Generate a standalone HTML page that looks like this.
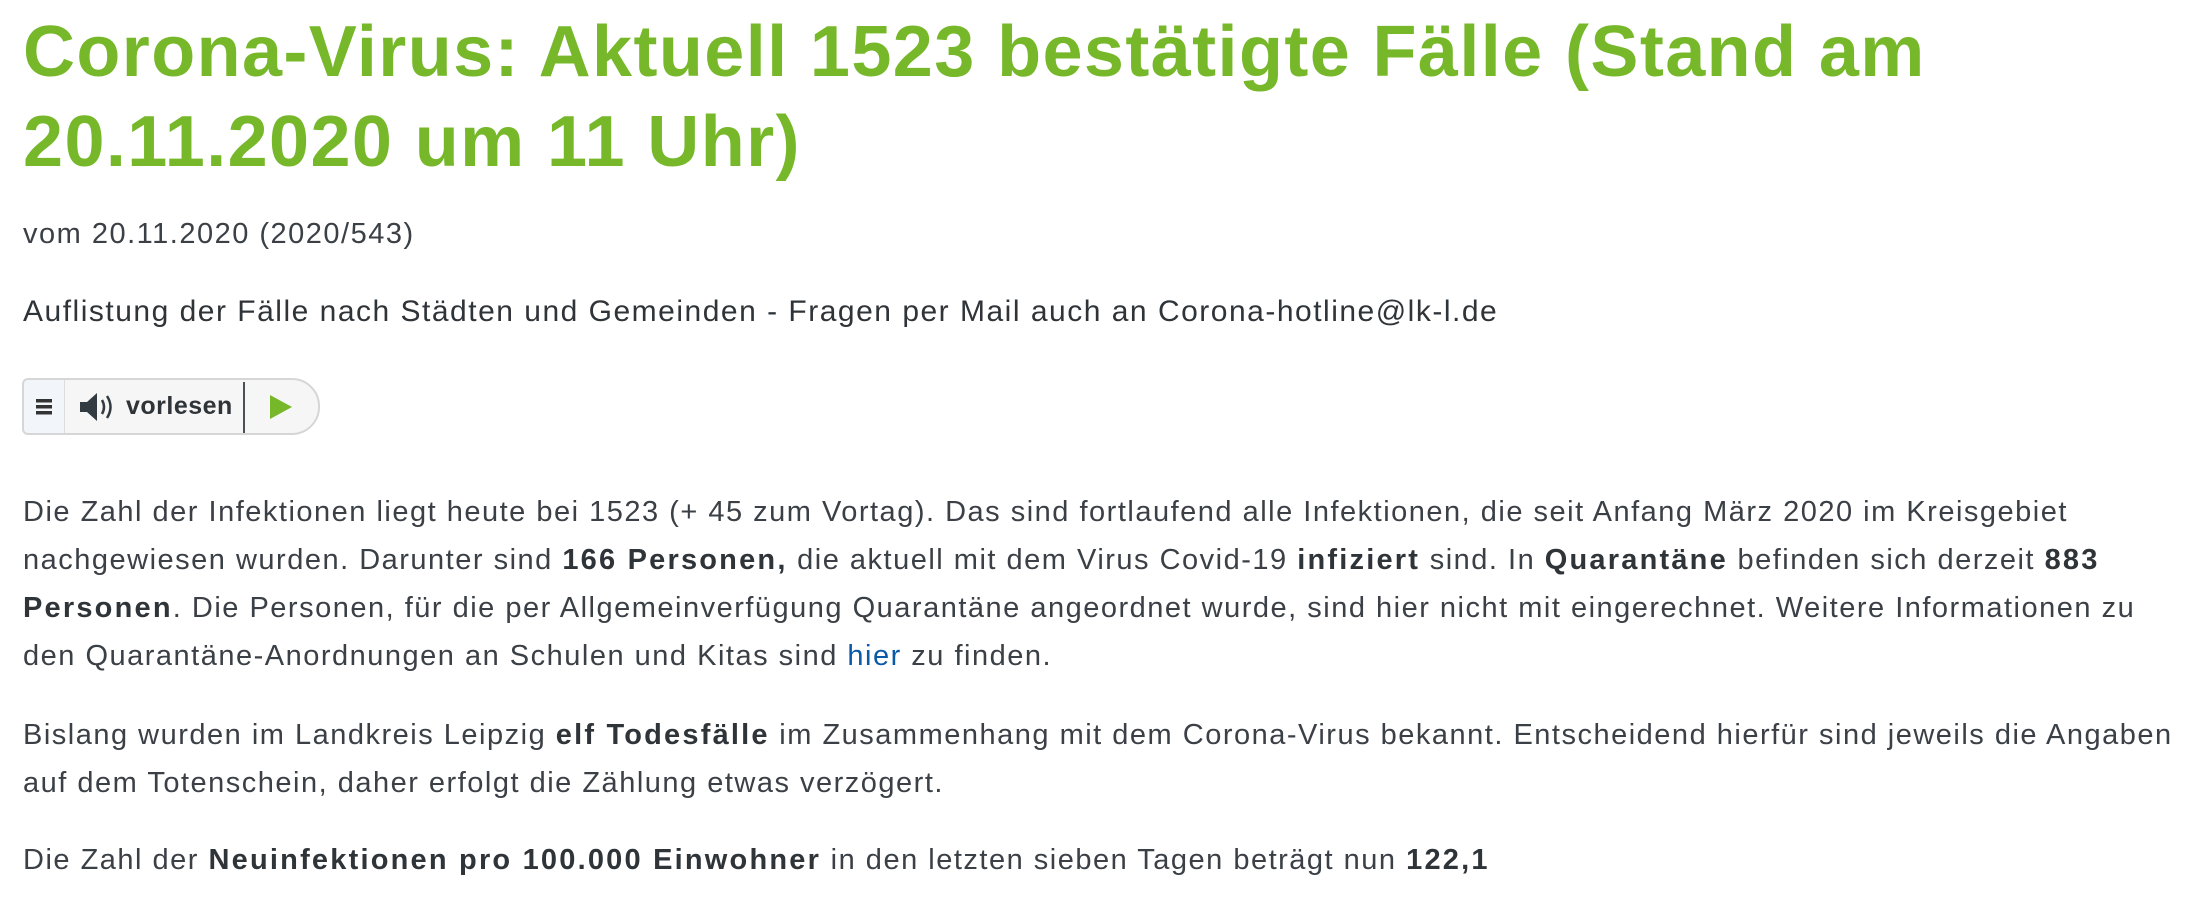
<!DOCTYPE html>
<html><head><meta charset="utf-8"><style>
html,body{margin:0;padding:0;background:#fff;width:2210px;height:902px;overflow:hidden}
body{font-family:"Liberation Sans",sans-serif;color:#3b4046}
h1{position:absolute;left:23px;top:7px;margin:0;font-size:72px;line-height:90px;font-weight:bold;color:#76b82a;letter-spacing:1.4px;white-space:nowrap}
.t{position:absolute;left:23px;font-size:29px;white-space:nowrap;letter-spacing:1.5px}
p{margin:0}
b{color:#2f3439;letter-spacing:2.2px}
a{color:#0a5aa8;text-decoration:none}
.btn{position:absolute;left:22px;top:378px;width:294px;height:53px;border:2px solid #d6d6d6;border-radius:6px 28px 28px 6px;background:#f6f6f6;box-sizing:content-box}
.m{position:absolute;left:0;top:0;width:40px;height:53px;background:#f2f6fa;border-right:1px solid #ddd;border-radius:5px 0 0 5px}
.d{position:absolute;left:219px;top:2px;width:2px;height:51px;background:#4a4f55}
</style></head><body>
<h1>Corona-Virus: Aktuell 1523 bestätigte Fälle (Stand am<br>20.11.2020 um 11 Uhr)</h1>
<div class="t" style="top:218px">vom 20.11.2020 (2020/543)</div>
<div class="t" style="top:295px;color:#2f3439;font-size:30px;letter-spacing:1.5px">Auflistung der Fälle nach Städten und Gemeinden - Fragen per Mail auch an Corona-hotline@lk-l.de</div>
<div class="btn">
 <div class="m"><svg width="40" height="53"><rect x="12" y="19" width="16" height="3.5" fill="#333"/><rect x="12" y="25" width="16" height="3.5" fill="#333"/><rect x="12" y="31" width="16" height="3.5" fill="#333"/></svg></div>
 <svg style="position:absolute;left:54px;top:10px" width="40" height="34"><path d="M2 12h7l10-9v28l-10-9H2z" fill="#333b42"/><path d="M24 10q4 7 0 14M29 6q7 11 0 22" stroke="#333b42" stroke-width="2.5" fill="none"/></svg>
 <div style="position:absolute;left:102px;top:12px;font-size:25px;font-weight:bold;color:#2f3439;letter-spacing:0.5px">vorlesen</div>
 <div class="d"></div>
 <svg style="position:absolute;left:245px;top:14px" width="26" height="26"><path d="M1 1L23 13L1 25z" fill="#76b82a"/></svg>
</div>
<div class="t" style="top:488px;line-height:48px">
<p>Die Zahl der Infektionen liegt heute bei 1523 (+ 45 zum Vortag). Das sind fortlaufend alle Infektionen, die seit Anfang März 2020 im Kreisgebiet<br>nachgewiesen wurden. Darunter sind <b>166 Personen,</b> die aktuell mit dem Virus Covid-19 <b>infiziert</b> sind. In <b>Quarantäne</b> befinden sich derzeit <b>883</b><br><b>Personen</b>. Die Personen, für die per Allgemeinverfügung Quarantäne angeordnet wurde, sind hier nicht mit eingerechnet. Weitere Informationen zu<br>den Quarantäne-Anordnungen an Schulen und Kitas sind <a>hier</a> zu finden.</p>
</div>
<div class="t" style="top:711px;line-height:48px">
<p>Bislang wurden im Landkreis Leipzig <b>elf Todesfälle</b> im Zusammenhang mit dem Corona-Virus bekannt. Entscheidend hierfür sind jeweils die Angaben<br>auf dem Totenschein, daher erfolgt die Zählung etwas verzögert.</p>
</div>
<div class="t" style="top:836px;line-height:48px">
<p>Die Zahl der <b>Neuinfektionen pro 100.000 Einwohner</b> in den letzten sieben Tagen beträgt nun <b>122,1</b></p>
</div>
</body></html>
